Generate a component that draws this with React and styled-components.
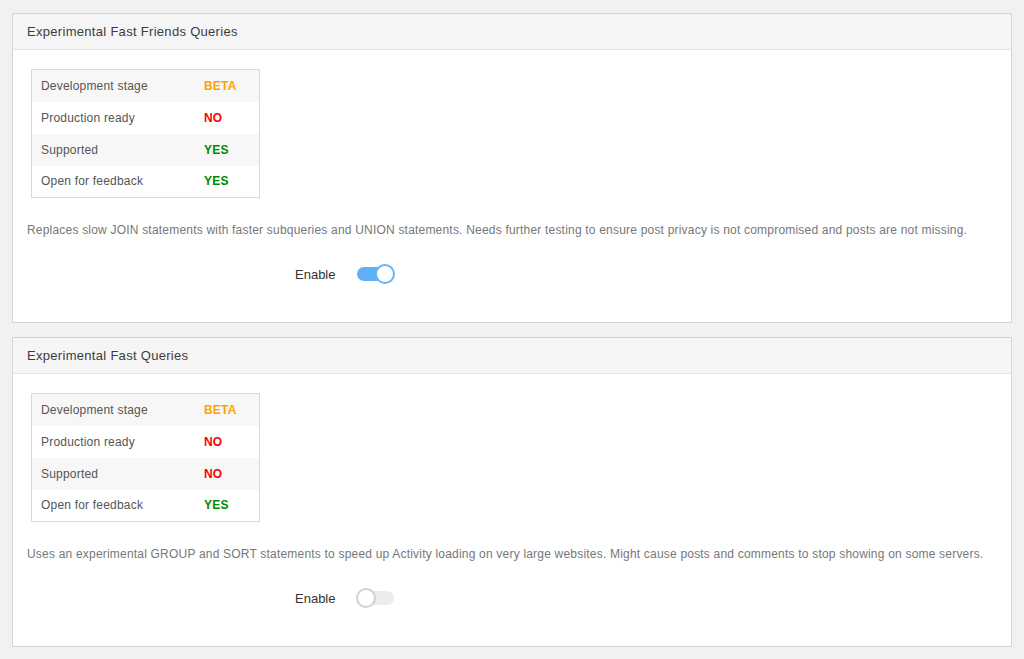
import React from "react";
import styled, { createGlobalStyle } from "styled-components";

const GlobalStyle = createGlobalStyle`
  html, body { margin: 0; padding: 0; }
  body {
    background: #f1f1f1;
    font-family: "Liberation Sans", Arial, sans-serif;
    -webkit-font-smoothing: antialiased;
  }
`;

const Page = styled.div`
  padding: 13px 12px 0;
  display: flex;
  flex-direction: column;
  gap: 14px;
`;

const Panel = styled.section`
  width: 1000px;
  box-sizing: border-box;
  background: #fff;
  border: 1px solid #d5d5d5;
`;

const PanelHeader = styled.h2`
  margin: 0;
  height: 35px;
  box-sizing: content-box;
  display: flex;
  align-items: center;
  padding: 0 14px;
  background: #f5f5f5;
  border-bottom: 1px solid #e3e3e3;
  font-size: 13px;
  letter-spacing: 0.3px;
  font-weight: 400;
  color: #3c3c3c;
`;

const PanelBody = styled.div`
  padding: 19px 14px 38px;
`;

const StatusTable = styled.table`
  margin-left: 4px;
  width: 229px;
  border: 1px solid #d9d9d9;
  border-collapse: collapse;
  border-spacing: 0;
  font-size: 12px;
  letter-spacing: 0.2px;
`;

const Row = styled.tr`
  height: 32px;
  background: ${(p) => (p.$striped ? "#f7f7f7" : "#fff")};
`;

const LabelCell = styled.td`
  width: 163px;
  padding: 0 0 0 9px;
  color: #555;
`;

const colors = { BETA: "#ffa200", NO: "#ff0000", YES: "#008a00" };

const ValueCell = styled.td`
  padding: 0;
  font-weight: 700;
  color: ${(p) => colors[p.$value]};
`;

const Description = styled.p`
  margin: 23px 0 0;
  font-size: 12px;
  letter-spacing: 0.2px;
  line-height: 18px;
  color: #777;
`;

const FieldRow = styled.div`
  margin-top: 25px;
  height: 20px;
  display: grid;
  grid-template-columns: 268px 62px auto;
  align-items: center;
`;

const FieldLabel = styled.label`
  grid-column: 2;
  font-size: 13px;
  color: #333;
`;

const Track = styled.span`
  position: relative;
  display: inline-block;
  width: 37px;
  height: 14px;
  border-radius: 7px;
  background: ${(p) => (p.$on ? "#5eaff5" : "#ececec")};
`;

const Knob = styled.span`
  position: absolute;
  top: -3px;
  left: ${(p) => (p.$on ? "18px" : "-1px")};
  width: 16px;
  height: 16px;
  border-radius: 50%;
  background: #fff;
  border: 2px solid ${(p) => (p.$on ? "#64b5f6" : "#d0d0d0")};
`;

const Toggle = ({ on }) => (
  <Track $on={on} role="switch" aria-checked={on}>
    <Knob $on={on} />
  </Track>
);

const panels = [
  {
    title: "Experimental Fast Friends Queries",
    rows: [
      ["Development stage", "BETA"],
      ["Production ready", "NO"],
      ["Supported", "YES"],
      ["Open for feedback", "YES"],
    ],
    text:
      "Replaces slow JOIN statements with faster subqueries and UNION statements. Needs further testing to ensure post privacy is not compromised and posts are not missing.",
    on: true,
  },
  {
    title: "Experimental Fast Queries",
    rows: [
      ["Development stage", "BETA"],
      ["Production ready", "NO"],
      ["Supported", "NO"],
      ["Open for feedback", "YES"],
    ],
    text:
      "Uses an experimental GROUP and SORT statements to speed up Activity loading on very large websites. Might cause posts and comments to stop showing on some servers.",
    on: false,
  },
];

export default function App() {
  return (
    <>
      <GlobalStyle />
      <Page>
        {panels.map((p) => (
          <Panel key={p.title}>
            <PanelHeader>{p.title}</PanelHeader>
            <PanelBody>
              <StatusTable>
                <tbody>
                  {p.rows.map(([label, value], i) => (
                    <Row key={label} $striped={i % 2 === 0}>
                      <LabelCell>{label}</LabelCell>
                      <ValueCell $value={value}>{value}</ValueCell>
                    </Row>
                  ))}
                </tbody>
              </StatusTable>
              <Description>{p.text}</Description>
              <FieldRow>
                <FieldLabel>Enable</FieldLabel>
                <Toggle on={p.on} />
              </FieldRow>
            </PanelBody>
          </Panel>
        ))}
      </Page>
    </>
  );
}
